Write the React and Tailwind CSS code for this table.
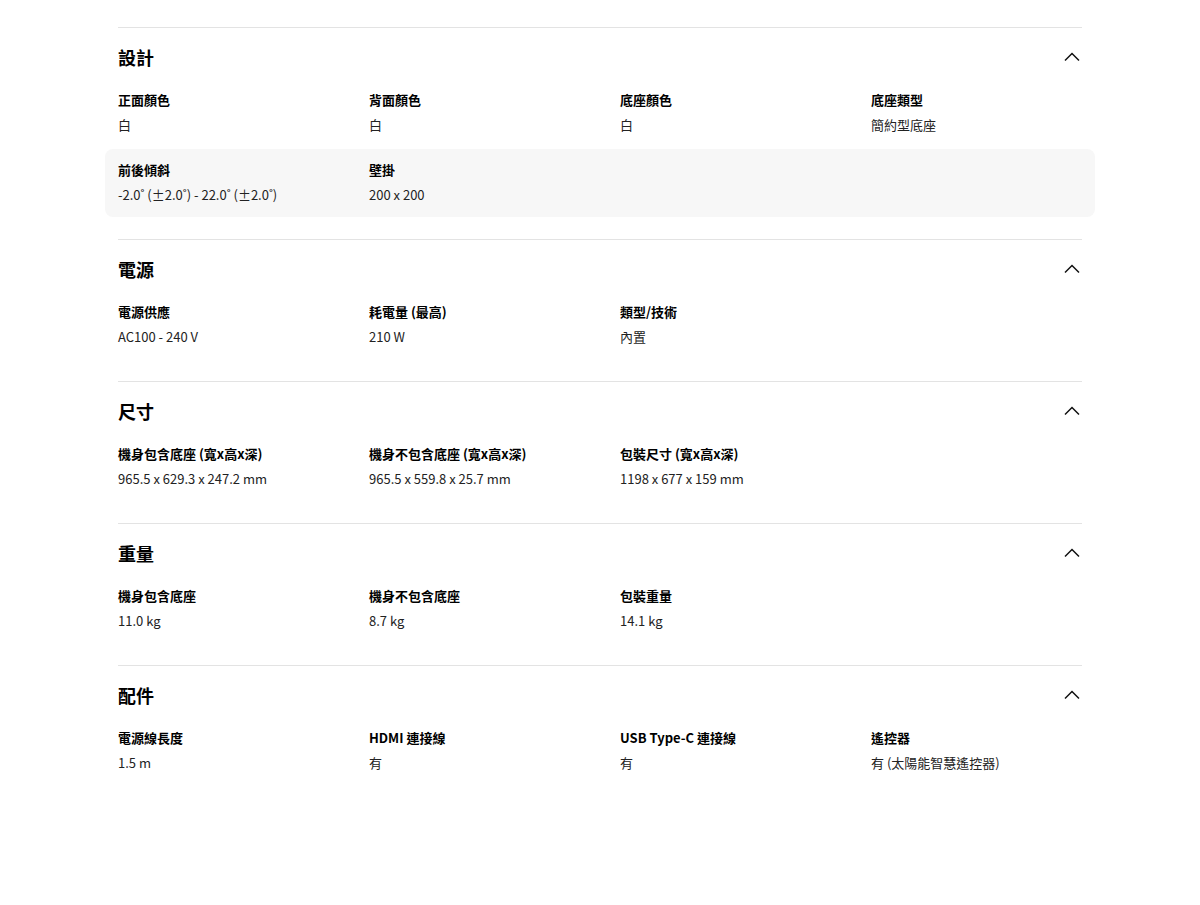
import { Fragment } from "react";

const sections = [
  {
    title: "設計",
    rows: [
      [
        ["正面顏色", "白"],
        ["背面顏色", "白"],
        ["底座顏色", "白"],
        ["底座類型", "簡約型底座"],
      ],
      [
        ["前後傾斜", "-2.0˚ (±2.0˚) - 22.0˚ (±2.0˚)"],
        ["壁掛", "200 x 200"],
      ],
    ],
  },
  {
    title: "電源",
    rows: [
      [
        ["電源供應", "AC100 - 240 V"],
        ["耗電量 (最高)", "210 W"],
        ["類型/技術", "內置"],
      ],
    ],
  },
  {
    title: "尺寸",
    rows: [
      [
        ["機身包含底座 (寬x高x深)", "965.5 x 629.3 x 247.2 mm"],
        ["機身不包含底座 (寬x高x深)", "965.5 x 559.8 x 25.7 mm"],
        ["包裝尺寸 (寬x高x深)", "1198 x 677 x 159 mm"],
      ],
    ],
  },
  {
    title: "重量",
    rows: [
      [
        ["機身包含底座", "11.0 kg"],
        ["機身不包含底座", "8.7 kg"],
        ["包裝重量", "14.1 kg"],
      ],
    ],
  },
  {
    title: "配件",
    rows: [
      [
        ["電源線長度", "1.5 m"],
        ["HDMI 連接線", "有"],
        ["USB Type-C 連接線", "有"],
        ["遙控器", "有 (太陽能智慧遙控器)"],
      ],
    ],
  },
];

function Chevron() {
  return (
    <svg width="20" height="12" viewBox="0 0 20 12" fill="none">
      <polyline points="3,9.5 10,2.5 17,9.5" stroke="#111" strokeWidth="1.5" />
    </svg>
  );
}

function Section({ title, rows }) {
  return (
    <section className="border-t border-[#e3e3e3] pt-[17px] pb-[22px]">
      <div className="flex h-6 items-center justify-between">
        <h2 className="text-[18px] font-bold leading-6 text-black">{title}</h2>
        <Chevron />
      </div>
      <div className="mt-[10px] flex flex-col gap-[2px]">
        {rows.map((row, i) => (
          <div
            key={i}
            className={`grid grid-cols-4 gap-x-10 pt-[11px] pb-[12px] ${
              i % 2 === 1 ? "-mx-[13px] rounded-lg bg-[#f7f7f7] px-[13px]" : ""
            }`}
          >
            {row.map(([label, value]) => (
              <Fragment key={label}>
                <div>
                  <div className="text-[13px] font-bold leading-5 text-black">{label}</div>
                  <div className="mt-[5px] text-[13px] leading-5 text-[#222]">{value}</div>
                </div>
              </Fragment>
            ))}
          </div>
        ))}
      </div>
    </section>
  );
}

export default function App() {
  return (
    <div
      className="min-h-[905px] w-full bg-white pt-[27px]"
      style={{ fontFamily: '"Noto Sans CJK TC", "Noto Sans", sans-serif' }}
    >
      <div className="mx-auto w-[964px]">
        {sections.map((s) => (
          <Section key={s.title} {...s} />
        ))}
      </div>
    </div>
  );
}
